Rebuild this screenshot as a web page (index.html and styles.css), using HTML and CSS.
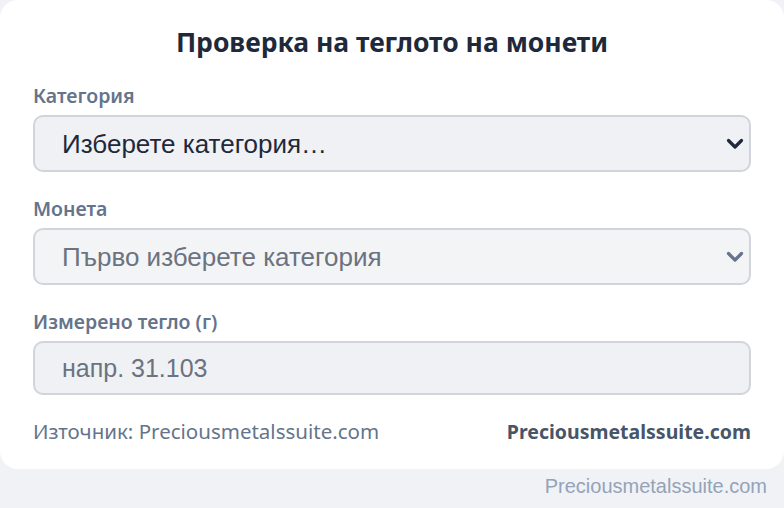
FILE: index.html
```html
<!DOCTYPE html>
<html lang="bg">
<head>
    <meta charset="UTF-8">
    <meta name="viewport" content="width=device-width, initial-scale=1.0">
    <title>Проверка на теглото на монети</title>
    <link rel="stylesheet" href="styles.css">
</head>
<body>
    <div class="card">
        <h1>Проверка на теглото на монети</h1>

        <!-- Category -->
        <div class="field">
            <label for="category">Категория</label>
            <div class="select-wrap">
                <select id="category">
                    <option>Изберете категория…</option>
                </select>
                <svg class="chevron" viewBox="0 0 20 20" width="20" height="20">
                    <path d="M3.5 6.5 L10 13 L16.5 6.5" fill="none" stroke="currentColor" stroke-width="3.2" stroke-linecap="round" stroke-linejoin="round"/>
                </svg>
            </div>
        </div>

        <!-- Coin -->
        <div class="field">
            <label for="coin">Монета</label>
            <div class="select-wrap disabled">
                <select id="coin" disabled>
                    <option>Първо изберете категория</option>
                </select>
                <svg class="chevron" viewBox="0 0 20 20" width="20" height="20">
                    <path d="M3.5 6.5 L10 13 L16.5 6.5" fill="none" stroke="currentColor" stroke-width="3.2" stroke-linecap="round" stroke-linejoin="round"/>
                </svg>
            </div>
        </div>

        <!-- Measured weight -->
        <div class="field">
            <label for="weight">Измерено тегло (г)</label>
            <input id="weight" type="text" placeholder="напр. 31.103">
        </div>

        <div class="card-footer">
            <span>Източник: Preciousmetalssuite.com</span>
            <strong>Preciousmetalssuite.com</strong>
        </div>
    </div>

    <div class="credit">Preciousmetalssuite.com</div>
</body>
</html>
```

FILE: styles.css
```css
body {
    margin: 0;
    background-color: #f0f2f6;
    font-family: "Noto Sans", "Open Sans", sans-serif;
}

.card {
    background-color: white;
    border-radius: 18px;
    padding: 26px 33px 24px 33px;
}

h1 {
    margin: 0 0 26px 0;
    text-align: center;
    font-size: 26.5px;
    line-height: 32px;
    font-weight: 700;
    color: #1e293b;
}

.field {
    margin-bottom: 25px;
}

.field label {
    display: block;
    font-size: 19.5px;
    line-height: 24px;
    font-weight: 600;
    color: #64748b;
    margin-bottom: 7px;
}

.select-wrap {
    position: relative;
    color: #1e293b;
}

.select-wrap.disabled {
    color: #64748b;
}

select,
input {
    display: block;
    width: 100%;
    box-sizing: border-box;
    font-family: "Liberation Sans", Arial, sans-serif;
    border: 2px solid #d1d5db;
    border-radius: 10px;
    background-color: #eff1f4;
    color: #1e293b;
    outline: none;
}

select {
    appearance: none;
    -webkit-appearance: none;
    height: 57px;
    font-size: 26px;
    padding: 0 50px 0 27px;
}

select:disabled {
    background-color: #f3f4f6;
    color: #6b7280;
    opacity: 1;
}

.chevron {
    position: absolute;
    right: 6px;
    top: 19px;
    pointer-events: none;
}

input {
    height: 54px;
    font-size: 25px;
    padding: 0 27px;
}

input::placeholder {
    color: #6b7280;
}

.card-footer {
    display: flex;
    justify-content: space-between;
    align-items: baseline;
    margin-top: -2px;
    font-size: 20.5px;
    line-height: 26px;
    color: #64748b;
}

.card-footer strong {
    font-size: 19.5px;
    color: #475569;
    font-weight: 700;
}

.credit {
    text-align: right;
    padding: 6px 17px 0 0;
    font-family: "Liberation Sans", Arial, sans-serif;
    font-size: 20px;
    color: #94a3b8;
}
```
